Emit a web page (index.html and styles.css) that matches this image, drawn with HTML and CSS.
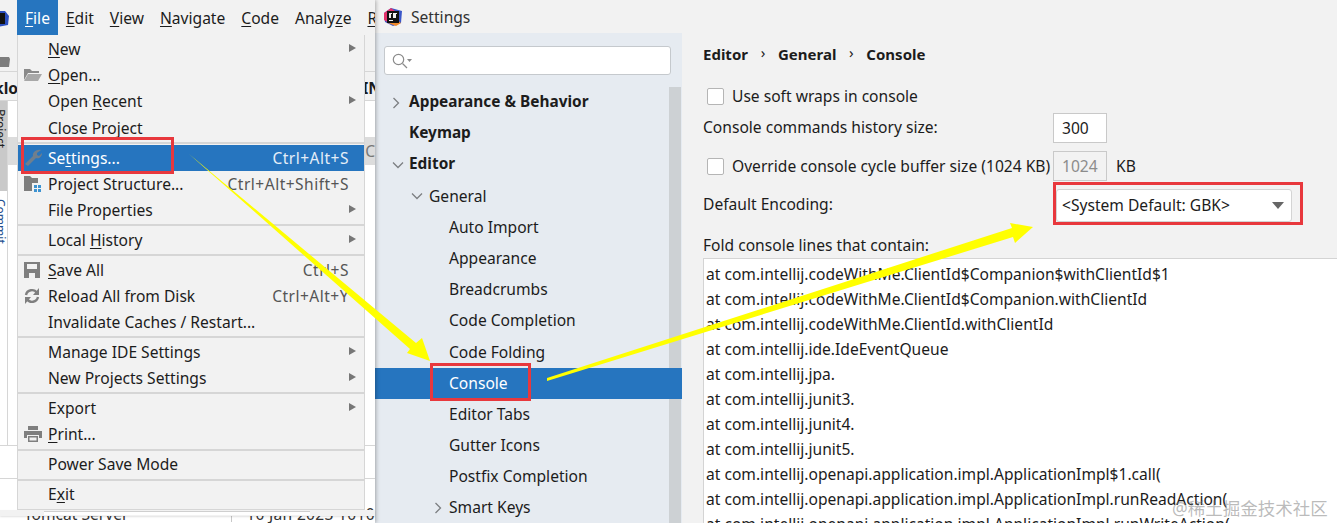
FILE: index.html
```html
<!DOCTYPE html>
<html lang="en">
<head>
    <meta charset="UTF-8">
    <meta name="viewport" content="width=device-width, initial-scale=1.0">
    <title>Settings</title>
    <link rel="stylesheet" href="styles.css">
</head>
<body>

<div class="screen">

    <section class="ide">
        <div class="menubar">
            <svg class="ide-logo" width="12" height="20" viewBox="0 0 12 20"><path d="M0 3h7l4 5-1 9-10 2z" fill="#2b4fc0"/><rect x="0" y="5" width="7" height="11" fill="#111"/></svg>
            <span class="menubar-item active"><u>F</u>ile</span>
            <span class="menubar-item"><u>E</u>dit</span>
            <span class="menubar-item"><u>V</u>iew</span>
            <span class="menubar-item"><u>N</u>avigate</span>
            <span class="menubar-item"><u>C</u>ode</span>
            <span class="menubar-item">Analy<u>z</u>e</span>
            <span class="menubar-item"><u>R</u></span>
        </div>
        <div class="ide-back">
            <div class="back-toolbar">
                <svg width="10" height="10" viewBox="0 0 10 10"><path d="M0 0h9l1 2-1 8H0z" fill="#7d7d7d"/></svg>
            </div>
            <div class="back-tabs"><b>klo</b><b class="back-tabs-right">IN</b></div>
            <div class="back-main">
                <div class="back-side">
                    <div class="back-side-top"><span>Project</span></div>
                    <div class="back-side-low"><span>Commit</span></div>
                </div>
                <div class="back-rest">
                    <div class="back-select"><span>C</span></div>
                </div>
            </div>
            <div class="back-row"></div>
            <div class="back-foot"><span class="back-foot-a">Tomcat Server</span><span class="back-foot-b">10 Jan 2023 1010</span></div>
        </div>

        <div class="menu-shade"><i></i></div>
        <div class="menu">
            <div class="menu-row"><span class="menu-text"><u>N</u>ew</span><i class="sub"></i></div>
            <div class="menu-row">
                <svg class="menu-icon" width="18" height="14" viewBox="0 0 18 14"><path d="M0 1h6l2 2h7v2H4L0 12z" fill="#8a8a8a"/><path d="M4 6h14l-4 7H0z" fill="#a8a8a8"/></svg>
                <span class="menu-text"><u>O</u>pen...</span>
            </div>
            <div class="menu-row"><span class="menu-text">Open <u>R</u>ecent</span><i class="sub"></i></div>
            <div class="menu-row"><span class="menu-text">Close Project</span></div>
            <div class="menu-sep"></div>
            <div class="menu-row selected">
                <svg class="menu-icon" width="18" height="18" viewBox="0 0 18 18"><path d="M17 1l-4 3 0 2 2 1 3-3c0 4-3 6-6 5l-8 8-3-2 8-8C8 4 12 0 17 1z" fill="#6f7f8d"/></svg>
                <span class="menu-text">Se<u>t</u>tings...</span>
                <span class="keys">Ctrl+Alt+S</span>
            </div>
            <div class="menu-row">
                <svg class="menu-icon" width="18" height="16" viewBox="0 0 18 16"><path d="M0 0h6l2 2h6v5H8v8H0z" fill="#7d7d7d"/><path d="M10 9h3v3h-3zM14 9h3v3h-3zM10 13h3v3h-3zM14 13h3v3h-3z" fill="#3d93d1"/></svg>
                <span class="menu-text">Project Structure...</span>
                <span class="keys">Ctrl+Alt+Shift+S</span>
            </div>
            <div class="menu-row"><span class="menu-text">File Properties</span><i class="sub"></i></div>
            <div class="menu-sep"></div>
            <div class="menu-row"><span class="menu-text">Local <u>H</u>istory</span><i class="sub"></i></div>
            <div class="menu-sep"></div>
            <div class="menu-row">
                <svg class="menu-icon" width="16" height="16" viewBox="0 0 16 16"><path d="M0 0h16v16H0z" fill="#7f7f7f"/><path d="M3 2h10v5H3z" fill="#f2f2f2"/><path d="M5 11h6v5H5z" fill="#f2f2f2"/></svg>
                <span class="menu-text"><u>S</u>ave All</span>
                <span class="keys">Ctrl+S</span>
            </div>
            <div class="menu-row">
                <svg class="menu-icon" width="16" height="16" viewBox="0 0 16 16"><path d="M2 7a6 6 0 0 1 11-2M14 9a6 6 0 0 1-11 2" fill="none" stroke="#7f7f7f" stroke-width="2.4"/><path d="M15 0v7H9zM1 16V9h6z" fill="#7f7f7f"/></svg>
                <span class="menu-text">Reload All from Disk</span>
                <span class="keys">Ctrl+Alt+Y</span>
            </div>
            <div class="menu-row"><span class="menu-text">Invalidate Caches / Restart...</span></div>
            <div class="menu-sep"></div>
            <div class="menu-row"><span class="menu-text">Manage IDE Settings</span><i class="sub"></i></div>
            <div class="menu-row"><span class="menu-text">New Projects Settings</span><i class="sub"></i></div>
            <div class="menu-sep"></div>
            <div class="menu-row"><span class="menu-text">Export</span><i class="sub"></i></div>
            <div class="menu-row">
                <svg class="menu-icon" width="18" height="16" viewBox="0 0 18 16"><path d="M4 0h10v4H4z" fill="#7f7f7f"/><path d="M0 5h18v7h-3V9H3v3H0z" fill="#7f7f7f"/><path d="M4 10h10v6H4zM5.500 11.500v3h7v-3z" fill="#7f7f7f" fill-rule="evenodd"/></svg>
                <span class="menu-text"><u>P</u>rint...</span>
            </div>
            <div class="menu-sep"></div>
            <div class="menu-row"><span class="menu-text">Power Save Mode</span></div>
            <div class="menu-sep"></div>
            <div class="menu-row"><span class="menu-text">E<u>x</u>it</span></div>
        </div>
    </section>

    <section class="settings">
        <div class="titlebar">
            <svg class="title-logo" width="20" height="20" viewBox="0 0 20 20">
                <path d="M1 6l7-5 11 3-1 12-8 3-8-4z" fill="#3b57c9"/>
                <path d="M1 6l7-5 4 3-6 12-5-3z" fill="#e3336b"/>
                <path d="M5 16l8 3 5-3-4-3z" fill="#f08a2c"/>
                <rect x="4" y="4" width="12" height="12" fill="#111"/>
                <path d="M6 6h3v1H8v4H6zM10 6h4v1h-1v4h-3z" fill="#eee"/>
                <rect x="6" y="13" width="4" height="1" fill="#eee"/>
            </svg>
            <span>Settings</span>
        </div>
        <div class="settings-body">
            <aside class="sidebar">
                <div class="search-wrap">
                    <div class="search">
                        <svg width="20" height="16" viewBox="0 0 20 16"><circle cx="6.500" cy="6.500" r="5.200" fill="none" stroke="#8b8b8b" stroke-width="1.200"/><path d="M10.500 10.500l4.500 4.500" stroke="#8b8b8b" stroke-width="1.300"/><path d="M15 6h5l-2.500 3z" fill="#8b8b8b"/></svg>
                    </div>
                </div>
                <div class="tree-wrap">
                    <div class="tree">
                        <div class="tree-row root"><svg class="chev" width="8" height="12" viewBox="0 0 8 12"><path d="M1.500 1l5 5-5 5" fill="none" stroke="#7c7f82" stroke-width="1.300"/></svg>Appearance &amp; Behavior</div>
                        <div class="tree-row root">Keymap</div>
                        <div class="tree-row root"><svg class="chev" width="12" height="8" viewBox="0 0 12 8"><path d="M1 1.500l5 5 5-5" fill="none" stroke="#7c7f82" stroke-width="1.300"/></svg>Editor</div>
                        <div class="tree-row level1"><svg class="chev" width="12" height="8" viewBox="0 0 12 8"><path d="M1 1.500l5 5 5-5" fill="none" stroke="#7c7f82" stroke-width="1.300"/></svg>General</div>
                        <div class="tree-row level2">Auto Import</div>
                        <div class="tree-row level2">Appearance</div>
                        <div class="tree-row level2">Breadcrumbs</div>
                        <div class="tree-row level2">Code Completion</div>
                        <div class="tree-row level2">Code Folding</div>
                        <div class="tree-row level2 selected">Console</div>
                        <div class="tree-row level2">Editor Tabs</div>
                        <div class="tree-row level2">Gutter Icons</div>
                        <div class="tree-row level2">Postfix Completion</div>
                        <div class="tree-row level2"><svg class="chev" width="8" height="12" viewBox="0 0 8 12"><path d="M1.500 1l5 5-5 5" fill="none" stroke="#7c7f82" stroke-width="1.300"/></svg>Smart Keys</div>
                    </div>
                    <div class="scrollbar"></div>
                </div>
            </aside>

            <main class="content">
                <div class="crumbs">
                    <b>Editor</b><span class="crumb-sep">›</span><b>General</b><span class="crumb-sep">›</span><b>Console</b>
                </div>
                <label class="check-row first"><i class="checkbox"></i>Use soft wraps in console</label>
                <div class="field-row history">
                    <span class="field-label">Console commands history size:</span>
                    <span class="input">300</span>
                </div>
                <div class="field-row buffer">
                    <label class="field-label check-label"><i class="checkbox"></i>Override console cycle buffer size (1024 KB)</label>
                    <span class="input disabled">1024</span>
                    <span class="unit">KB</span>
                </div>
                <div class="field-row encoding">
                    <span class="field-label">Default Encoding:</span>
                    <span class="combo">&lt;System Default: GBK&gt;<i class="combo-arrow"></i></span>
                </div>
                <div class="fold-label">Fold console lines that contain:</div>
                <div class="fold-list">
                    <div>at com.intellij.codeWithMe.ClientId$Companion$withClientId$1</div>
                    <div>at com.intellij.codeWithMe.ClientId$Companion.withClientId</div>
                    <div>at com.intellij.codeWithMe.ClientId.withClientId</div>
                    <div>at com.intellij.ide.IdeEventQueue</div>
                    <div>at com.intellij.jpa.</div>
                    <div>at com.intellij.junit3.</div>
                    <div>at com.intellij.junit4.</div>
                    <div>at com.intellij.junit5.</div>
                    <div>at com.intellij.openapi.application.impl.ApplicationImpl$1.call(</div>
                    <div>at com.intellij.openapi.application.impl.ApplicationImpl.runReadAction(</div>
                    <div>at com.intellij.openapi.application.impl.ApplicationImpl.runWriteAction(</div>
                </div>
            </main>
        </div>
    </section>

    <!-- annotations drawn on top of the screenshot -->
    <svg class="notes" width="1337" height="523" viewBox="0 0 1337 523">
        <path d="M189 154L416 343L422 338L430 361L407 353L410 349z" fill="#ffff00"/>
        <path d="M547 378L1012 228L1010 223L1033 227L1015 243L1013 237L547 381z" fill="#ffff00"/>
        <g fill="none" stroke="#e8383d" stroke-width="3">
            <rect x="22.500" y="138.500" width="150" height="34"/>
            <rect x="431.500" y="364.500" width="98" height="35"/>
            <rect x="1054.500" y="183.500" width="247" height="40"/>
        </g>
    </svg>
    <div class="watermark">@稀土掘金技术社区</div>

</div>

</body>
</html>
```
FILE: styles.css
```css
html, body {
    margin: 0;
    padding: 0;
}

body {
    font-family: "Noto Sans", Arial, sans-serif;
    font-size: 15.600px;
    color: #1c1c1c;
    background: #f2f2f2;
    overflow: hidden;
}

u {
    text-underline-offset: 2px;
}

.screen {
    position: relative;
    width: 1337px;
    height: 523px;
    display: flex;
    overflow: hidden;
}

/* left window, with the open File menu */
.ide {
    position: relative;
    z-index: 1;
    width: 375px;
    flex: none;
    display: flex;
    flex-direction: column;
    background: #fff;
    box-shadow: 1px 0 4px rgba(0, 0, 0, 0.3);
}

.menubar {
    height: 35px;
    flex: none;
    display: flex;
    align-items: center;
    background: #f2f2f2;
    overflow: hidden;
}

.ide-logo {
    width: 12px;
    margin-left: -2px;
    margin-right: 7px;
    flex: none;
}

.menubar-item {
    height: 35px;
    line-height: 36px;
    padding: 0 8px;
    white-space: nowrap;
}

.menubar-item.active {
    background: #2675bf;
    color: #fff;
}

.ide-back {
    flex: 1;
    display: flex;
    flex-direction: column;
    min-height: 0;
    overflow: hidden;
}

.back-toolbar {
    height: 37px;
    flex: none;
    padding: 15px 0 0 0;
    box-sizing: border-box;
    background: #f2f2f2;
    border-bottom: 1px solid #d6d6d6;
}

.back-tabs {
    height: 29px;
    flex: none;
    box-sizing: border-box;
    line-height: 32px;
    display: flex;
    justify-content: space-between;
    background: #f2f2f2;
    border-bottom: 1px solid #d6d6d6;
    margin-left: -6px;
    overflow: hidden;
}

.back-tabs-right {
    margin-right: -6px;
}

.back-main {
    flex: 1;
    display: flex;
    background: #fff;
    min-height: 0;
}

.back-side {
    width: 7px;
    flex: none;
    border-right: 1px solid #d6d6d6;
    overflow: hidden;
    font-size: 12px;
}

.back-side-top {
    height: 90px;
    background: #c9c9c9;
    padding-top: 8px;
    box-sizing: border-box;
    color: #222;
}

.back-side-low {
    padding-top: 8px;
    color: #24508f;
}

.back-side span {
    display: block;
    writing-mode: vertical-rl;
    margin-left: -6px;
    line-height: 12px;
}

.back-rest {
    flex: 1;
    padding-top: 36px;
}

.back-select {
    height: 28px;
    line-height: 28px;
    background: #dcdcdc;
    text-align: right;
    color: #777;
}

.back-row {
    height: 33px;
    flex: none;
    border-top: 1px solid #d6d6d6;
    box-sizing: border-box;
}

.back-foot {
    height: 45px;
    flex: none;
    box-sizing: border-box;
    border-top: 1px solid #d6d6d6;
    color: #333;
    white-space: nowrap;
    display: flex;
    align-items: flex-end;
    line-height: 15px;
}

.back-foot-a {
    margin-left: 24px;
    width: 209px;
    margin-bottom: 1px;
}

.back-foot-b {
    border-left: 1px solid #c8c8c8;
    padding-left: 14px;
    letter-spacing: 0.300px;
    margin-bottom: 1px;
}

.menu {
    position: absolute;
    left: 17px;
    top: 35px;
    width: 348px;
    height: 475px;
    box-sizing: border-box;
    padding-top: 1px;
    background: #f2f2f2;
    border: 1px solid #d6d6d6;
    border-top: none;
}

/* lighter frame below the menu, it covers the row behind */
.menu-shade {
    position: absolute;
    left: 0;
    top: 510px;
    width: 375px;
    height: 6px;
    background: #f2f2f2;
    box-shadow: 0 1px 2px rgba(0, 0, 0, 0.12);
}

.menu-shade i {
    display: block;
    margin: 1px 65px 0 44px;
    height: 4px;
    background: #fff;
    border-top: 1px solid #cfcfcf;
    box-sizing: border-box;
}

.menu-row {
    position: relative;
    height: 26.200px;
    line-height: 26px;
    padding-left: 30px;
    white-space: nowrap;
}

.menu-row.selected {
    background: #2675bf;
    color: #fff;
}

.menu-icon {
    position: absolute;
    left: 6px;
    top: 50%;
    transform: translateY(-50%);
}

.keys {
    position: absolute;
    right: 15px;
    top: 0;
    color: #555;
    font-size: 15.500px;
    letter-spacing: 0.500px;
}

.selected .keys {
    color: #e4eef8;
}

.sub {
    position: absolute;
    right: 8px;
    top: 8px;
    border-left: 7px solid #777;
    border-top: 4.500px solid transparent;
    border-bottom: 4.500px solid transparent;
}

.menu-sep {
    height: 2px;
    margin: 1px 0 0.750px;
    background: #d6d6d6;
}

/* right window */
.settings {
    flex: 1;
    display: flex;
    flex-direction: column;
    min-width: 0;
}

.titlebar {
    height: 33px;
    flex: none;
    display: flex;
    align-items: center;
    padding-left: 8px;
    gap: 8px;
    color: #333;
}

.settings-body {
    flex: 1;
    display: flex;
    min-height: 0;
}

.sidebar {
    width: 307px;
    flex: none;
    background: #e6ebf1;
    display: flex;
    flex-direction: column;
}

.search-wrap {
    padding: 13px 11px 0 9px;
}

.search {
    height: 29px;
    box-sizing: border-box;
    background: #fff;
    border: 1px solid #c5c9cd;
    border-radius: 3px;
    display: flex;
    align-items: center;
    padding-left: 7px;
}

.tree-wrap {
    flex: 1;
    display: flex;
    margin-top: 12px;
    min-height: 0;
}

.tree {
    flex: 1;
}

.scrollbar {
    width: 12px;
    margin-right: 1px;
    background: #cdd1d4;
}

.tree-row {
    position: relative;
    height: 31.200px;
    line-height: 30px;
    white-space: nowrap;
}

.tree-row.root {
    padding-left: 34px;
    font-weight: 700;
    font-size: 15.400px;
}

.tree-row.level1 {
    padding-left: 54px;
}

.tree-row.level2 {
    padding-left: 74px;
}

.tree-row.selected {
    background: #2675bf;
    color: #fff;
    margin-right: -13px;
    margin-left: -1px;
    padding-left: 75px;
}

.chev {
    position: absolute;
    top: 50%;
    transform: translateY(-50%);
}

.root .chev {
    left: 17px;
}

.level1 .chev {
    left: 36px;
}

.level2 .chev {
    left: 59px;
}

.content {
    flex: 1;
    min-width: 0;
    padding-left: 21px;
}

.crumbs {
    height: 44px;
    padding-top: 9px;
    box-sizing: border-box;
    display: flex;
    align-items: flex-start;
    line-height: 24px;
    font-size: 15px;
}

.crumb-sep {
    width: 30px;
    text-align: center;
    line-height: 20px;
}

.check-row,
.check-label {
    display: flex;
    align-items: center;
}

.checkbox {
    width: 15px;
    height: 15px;
    margin: 0 8px 0 4px;
    background: #fff;
    border: 1px solid #b5b5b5;
    border-radius: 2px;
    flex: none;
}

.check-row.first {
    height: 36px;
    padding-top: 2px;
    box-sizing: border-box;
}

.field-row {
    display: flex;
    align-items: center;
}

.field-label {
    width: 350px;
    flex: none;
    white-space: nowrap;
}

.history .field-label {
    padding-bottom: 2px;
}

.encoding .field-label {
    padding-bottom: 3px;
}

.input {
    width: 54px;
    height: 30px;
    line-height: 28px;
    box-sizing: border-box;
    background: #fff;
    border: 1px solid #c9c9c9;
    padding-left: 8px;
    flex: none;
}

.input.disabled {
    background: #f2f2f2;
    color: #8c8c8c;
}

.unit {
    margin-left: 9px;
}

.history,
.buffer {
    margin-bottom: 8px;
}

.encoding {
    height: 33px;
}

.combo {
    position: relative;
    width: 236px;
    height: 33px;
    line-height: 30px;
    margin-left: 3px;
    padding-left: 5px;
    box-sizing: border-box;
    background: #fff;
    border: 1px solid #d4d4d4;
    border-radius: 3px;
    white-space: nowrap;
}

.combo-arrow {
    position: absolute;
    right: 7px;
    top: 12px;
    border-top: 7px solid #666;
    border-left: 6px solid transparent;
    border-right: 6px solid transparent;
}

.fold-label {
    height: 36px;
    line-height: 46px;
}

.fold-list {
    background: #fff;
    border: 1px solid #d4d4d4;
    border-right: none;
    padding: 3px 0 0 2px;
    height: 300px;
    box-sizing: border-box;
    line-height: 25px;
    white-space: nowrap;
}

.fold-list div {
    height: 25px;
}

/* annotations */
.notes {
    position: absolute;
    z-index: 2;
    left: 0;
    top: 0;
    pointer-events: none;
}

.watermark {
    position: absolute;
    z-index: 2;
    left: 1172px;
    top: 495px;
    font-family: "Noto Sans", "Noto Sans CJK SC", sans-serif;
    font-size: 17.500px;
    line-height: 26px;
    color: rgba(120, 120, 120, 0.5);
    white-space: nowrap;
}
```
